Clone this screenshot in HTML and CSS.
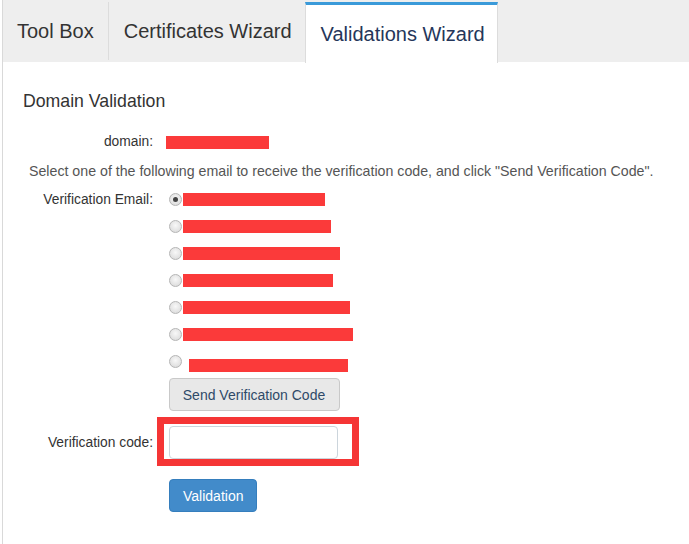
FILE: index.html
```html
<!DOCTYPE html>
<html lang="en">
<head>
  <meta charset="UTF-8" />
  <meta name="viewport" content="width=device-width, initial-scale=1" />
  <title>Validations Wizard</title>
  <link rel="stylesheet" href="styles.css">
</head>
<body>
  <div class="page">
    <ul class="tabs">
      <li class="tab tab-first">Tool Box</li>
      <li class="tab tab-second">Certificates Wizard</li>
      <li class="tab active">Validations Wizard</li>
    </ul>

    <div class="panel">
      <h3 class="title">Domain Validation</h3>

      <div class="row row-domain">
        <label class="label">domain:</label>
        <div class="field">
          <span class="mask mask-domain" style="width:103px"></span>
        </div>
      </div>

      <p class="hint">Select one of the following email to receive the verification code, and click "Send Verification Code".</p>

      <div class="row row-top">
        <label class="label label-email">Verification Email:</label>
        <div class="field">
          <!-- emails are masked in the screenshot -->
          <div class="option"><span class="radio checked"></span><span class="mask" style="width:142px"></span></div>
          <div class="option"><span class="radio"></span><span class="mask" style="width:148px"></span></div>
          <div class="option"><span class="radio"></span><span class="mask" style="width:157px"></span></div>
          <div class="option"><span class="radio"></span><span class="mask" style="width:150px"></span></div>
          <div class="option"><span class="radio"></span><span class="mask" style="width:167px"></span></div>
          <div class="option"><span class="radio"></span><span class="mask" style="width:170px"></span></div>
          <div class="option"><span class="radio"></span><span class="mask mask-last" style="width:159px"></span></div>
          <button class="btn btn-default">Send Verification Code</button>
        </div>
      </div>

      <div class="row row-code">
        <label class="label">Verification code:</label>
        <div class="field">
          <div class="highlight">
            <input class="input" type="text" />
          </div>
        </div>
      </div>

      <div class="row row-submit">
        <span class="label"></span>
        <div class="field">
          <button class="btn btn-primary">Validation</button>
        </div>
      </div>
    </div>
  </div>
</body>
</html>
```

FILE: styles.css
```css
body {
  margin: 0;
  font-family: "Liberation Sans", Arial, sans-serif;
  color: #333;
  background: #fff;
}

.page {
  margin-left: 2px;
  border-left: 1px solid #d9d9d9;
  min-height: 544px;
}

/* tabs */
.tabs {
  display: flex;
  align-items: flex-start;
  list-style: none;
  margin: 0;
  padding: 2px 0 0;
  height: 60px;
  background: #eeeeee;
}

.tab {
  font-size: 20px;
  line-height: 58px;
  padding: 0 14px;
  color: #333;
}

.tab-first {
  border-right: 1px solid #dcdcdc;
}

.tab-second {
  padding: 0 13px 0 15px;
}

.tab.active {
  background: #fff;
  color: #25365a;
  border-top: 3px solid #3a9ad9;
  border-left: 1px solid #dcdcdc;
  border-right: 1px solid #dcdcdc;
  padding: 0 12px 0 15px;
}

/* panel */
.panel {
  padding: 29px 0 30px;
}

.title {
  margin: 0 0 0 20px;
  font-size: 17.7px;
  font-weight: normal;
  line-height: 20px;
}

.row {
  display: flex;
  align-items: center;
  font-size: 13.8px;
}

.row-top {
  align-items: flex-start;
}

.label {
  width: 150px;
  flex: none;
  text-align: right;
  padding-right: 16px;
}

.label-email {
  line-height: 27px;
}

.row-domain {
  margin-top: 21px;
  line-height: 20px;
}

.row-domain .field {
  margin-left: -3px;
  display: flex;
}

.hint {
  margin: 9px 0 5px 26px;
  font-size: 14.2px;
  line-height: 20px;
  color: #555;
}

.option {
  display: flex;
  align-items: center;
  height: 27px;
}

.mask {
  display: inline-block;
  height: 13px;
  background: #fb3a3a;
}

.mask-last {
  margin-left: 6px;
  margin-top: 8px;
}

.radio {
  width: 11px;
  height: 11px;
  margin-right: 1px;
  border-radius: 50%;
  border: 1px solid #b5b5b5;
  background: radial-gradient(circle at 50% 40%, #f8f8f8, #d6d6d6);
  position: relative;
}

.radio.checked::after {
  content: "";
  position: absolute;
  left: 3px;
  top: 3px;
  width: 5px;
  height: 5px;
  border-radius: 50%;
  background: #444;
}

.btn {
  font-family: inherit;
  font-size: 14px;
  height: 33px;
  padding: 0 12px;
  border-radius: 4px;
  cursor: pointer;
}

.btn-default {
  margin-top: 3px;
  padding: 0 13px 0 12px;
  width: 171px;
  background: #e8e8e8;
  border: 1px solid #c9c9c9;
  color: #2f4a68;
}

.btn-primary {
  background: #428bca;
  border: 1px solid #357ebd;
  color: #fff;
  padding: 0 13px;
}

.row-code {
  margin-top: 15px;
}

.highlight {
  position: relative;
}

/* red annotation box drawn over the input */
.highlight::after {
  content: "";
  position: absolute;
  left: -12px;
  top: -9px;
  right: -21px;
  bottom: -7px;
  border: 7px solid #f53535;
}

.input {
  display: block;
  width: 169px;
  height: 33px;
  box-sizing: border-box;
  border: 1px solid #ccd5dc;
  border-radius: 4px;
  background: #fff;
}

.row-submit {
  margin-top: 20px;
}
```
